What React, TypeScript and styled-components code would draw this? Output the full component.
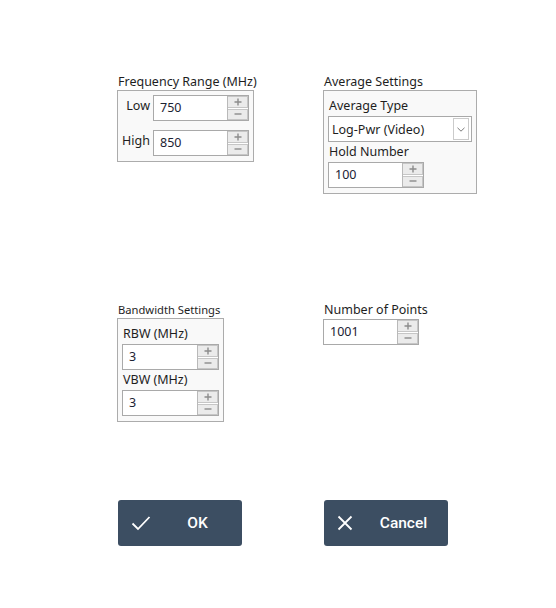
import styled, { createGlobalStyle } from "styled-components";

const GlobalStyle = createGlobalStyle`
  html, body {
    margin: 0;
    padding: 0;
    background: #ffffff;
  }
  body {
    font-family: "Noto Sans", "Open Sans", sans-serif;
    color: #1e1e1e;
  }
`;

const Page = styled.div`
  width: 556px;
  height: 608px;
  box-sizing: border-box;
  padding: 74px 0 0 117px;
`;

const Layout = styled.div`
  display: grid;
  grid-template-columns: 206px auto;
  grid-template-rows: 228px 198px auto;
`;

const Section = styled.div`
  display: flex;
  flex-direction: column;
  align-items: flex-start;
`;

const SectionTitle = styled.div<{ $small?: boolean }>`
  font-size: ${(p) => (p.$small ? "11.2px" : "12.5px")};
  line-height: 16px;
  padding-left: 1px;
  white-space: nowrap;
`;

const GroupBox = styled.div`
  box-sizing: border-box;
  border: 1px solid #acacac;
  background: #f9f9f9;
  padding: 4px 4px 5px;
  display: flex;
  flex-direction: column;
`;

const RangeRows = styled.div`
  display: grid;
  grid-template-columns: 28px 96px;
  column-gap: 3px;
  row-gap: 9px;
`;

const RangeLabel = styled.div`
  font-size: 12.5px;
  line-height: 16px;
  padding-top: 3px;
  text-align: right;
`;

const FieldLabel = styled.div<{ $first?: boolean }>`
  font-size: 12.5px;
  line-height: ${(p) => (p.$first ? "21px" : "20px")};
  padding-left: 1px;
  white-space: nowrap;
`;

const SpinBox = styled.div<{ $width?: number }>`
  box-sizing: border-box;
  width: ${(p) => p.$width ?? 96}px;
  height: 26px;
  display: flex;
  border: 1px solid #a9a9a9;
  background: #ffffff;
`;

const SpinValue = styled.div`
  flex: 1;
  font-size: 12.5px;
  line-height: 24px;
  padding-left: 6px;
  color: #1c2333;
`;

const SpinButtons = styled.div`
  width: 20px;
  display: flex;
  flex-direction: column;
  gap: 1px;
  border-left: 1px solid #b9b9b9;
  background: #ffffff;
`;

const SpinButton = styled.div`
  flex: 1;
  display: flex;
  align-items: center;
  justify-content: center;
  background: #ebebeb;
  border: 1px solid #c6c6c6;
  border-left: none;
`;

const Combo = styled.div`
  box-sizing: border-box;
  width: 144px;
  height: 26px;
  display: flex;
  align-items: center;
  border: 1px solid #a9a9a9;
  background: #ffffff;
`;

const ComboText = styled.div`
  flex: 1;
  font-size: 12.5px;
  padding-left: 3px;
  white-space: nowrap;
`;

const ComboArrow = styled.div`
  box-sizing: border-box;
  width: 16px;
  height: 22px;
  margin-right: 2px;
  display: flex;
  align-items: center;
  justify-content: center;
  border: 1px solid #cbcbcb;
  background: #ffffff;
`;

const PointsBox = styled.div`
  margin-top: 1px;
`;

const ActionButton = styled.button`
  box-sizing: border-box;
  width: 124px;
  height: 46px;
  margin-left: 1px;
  display: flex;
  align-items: center;
  padding: 0 0 0 13px;
  border: none;
  border-radius: 3px;
  background: #3c4e62;
  color: #ffffff;
  font-family: Roboto, "Noto Sans", sans-serif;
  font-size: 15.5px;
  font-weight: 500;
  cursor: pointer;
`;

const ButtonIcon = styled.span`
  width: 22px;
  display: flex;
  align-items: center;
`;

const ButtonText = styled.span`
  flex: 1;
  text-align: center;
`;

function Plus() {
  return (
    <svg width="8" height="8" viewBox="0 0 8 8">
      <path d="M4 0.5V7.5M0.5 4H7.5" stroke="#8c8c8c" strokeWidth="1.4" />
    </svg>
  );
}

function Minus() {
  return (
    <svg width="8" height="8" viewBox="0 0 8 8">
      <path d="M0.5 4H7.5" stroke="#8c8c8c" strokeWidth="1.4" />
    </svg>
  );
}

function NumberField(props: { value: string; width?: number }) {
  return (
    <SpinBox $width={props.width}>
      <SpinValue>{props.value}</SpinValue>
      <SpinButtons>
        <SpinButton>
          <Plus />
        </SpinButton>
        <SpinButton>
          <Minus />
        </SpinButton>
      </SpinButtons>
    </SpinBox>
  );
}

function CheckIcon() {
  return (
    <svg width="20" height="16" viewBox="0 0 20 16">
      <path d="M1.5 8.5L7 14L18.5 2" fill="none" stroke="#ffffff" strokeWidth="1.8" />
    </svg>
  );
}

function CrossIcon() {
  return (
    <svg width="16" height="16" viewBox="0 0 16 16">
      <path d="M1.5 1.5L14.5 14.5M14.5 1.5L1.5 14.5" fill="none" stroke="#ffffff" strokeWidth="1.8" />
    </svg>
  );
}

function ChevronIcon() {
  return (
    <svg width="8" height="5" viewBox="0 0 8 5">
      <path d="M0.5 0.8L4 4.2L7.5 0.8" fill="none" stroke="#7a7a7a" strokeWidth="1" />
    </svg>
  );
}

export default function App() {
  return (
    <>
      <GlobalStyle />
      <Page>
        <Layout>
          <Section>
            <SectionTitle>Frequency Range (MHz)</SectionTitle>
            <GroupBox>
              <RangeRows>
                <RangeLabel>Low</RangeLabel>
                <NumberField value="750" />
                <RangeLabel>High</RangeLabel>
                <NumberField value="850" />
              </RangeRows>
            </GroupBox>
          </Section>

          <Section>
            <SectionTitle>Average Settings</SectionTitle>
            <GroupBox>
              <FieldLabel $first>Average Type</FieldLabel>
              <Combo>
                <ComboText>Log-Pwr (Video)</ComboText>
                <ComboArrow>
                  <ChevronIcon />
                </ComboArrow>
              </Combo>
              <FieldLabel>Hold Number</FieldLabel>
              <NumberField value="100" />
            </GroupBox>
          </Section>

          <Section>
            <SectionTitle $small>Bandwidth Settings</SectionTitle>
            <GroupBox>
              <FieldLabel $first>RBW (MHz)</FieldLabel>
              <NumberField value="3" width={97} />
              <FieldLabel>VBW (MHz)</FieldLabel>
              <NumberField value="3" width={97} />
            </GroupBox>
          </Section>

          <Section>
            <SectionTitle>Number of Points</SectionTitle>
            <PointsBox>
              <NumberField value="1001" />
            </PointsBox>
          </Section>

          <Section>
            <ActionButton>
              <ButtonIcon>
                <CheckIcon />
              </ButtonIcon>
              <ButtonText>OK</ButtonText>
            </ActionButton>
          </Section>

          <Section>
            <ActionButton>
              <ButtonIcon>
                <CrossIcon />
              </ButtonIcon>
              <ButtonText>Cancel</ButtonText>
            </ActionButton>
          </Section>
        </Layout>
      </Page>
    </>
  );
}
